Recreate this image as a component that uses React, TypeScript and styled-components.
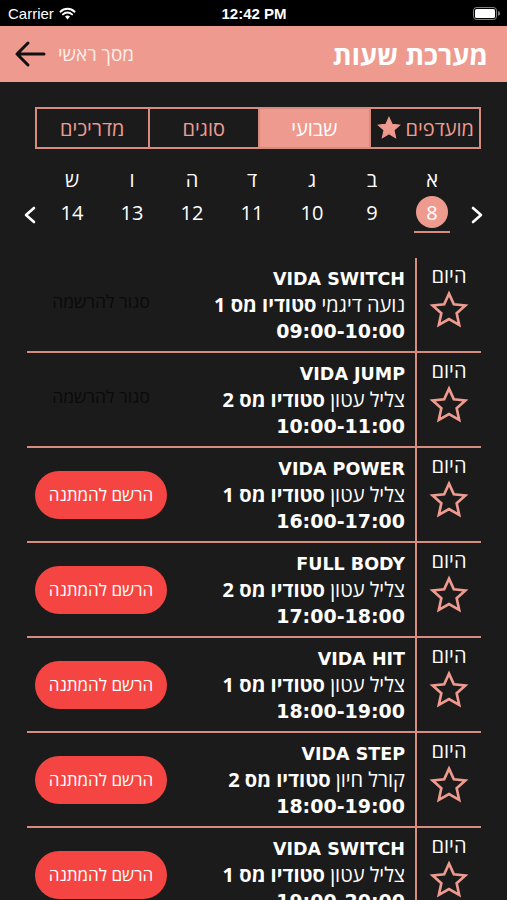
import React from 'react';
import styled, { createGlobalStyle } from 'styled-components';

const PINK = '#ee9a8f';
const LINE = '#d88b7f';
const BG = '#1b1b1b';
const RED = '#f54543';

const GlobalStyle = createGlobalStyle`
  html, body {
    margin: 0;
    padding: 0;
    background: ${BG};
  }
  body {
    font-family: 'Open Sans', 'DejaVu Sans', 'Liberation Sans', sans-serif;
    color: #fff;
  }
`;

const Screen = styled.div`
  width: 507px;
  height: 900px;
  overflow: hidden;
  background: ${BG};
`;

const StatusBar = styled.div`
  height: 26px;
  background: #000;
  display: grid;
  grid-template-columns: 1fr auto 1fr;
  align-items: center;
  padding: 0 7px 0 8px;
  font-size: 15px;
  color: #fff;
  font-family: 'Liberation Sans', 'DejaVu Sans', sans-serif;

  .left {
    display: flex;
    align-items: center;
    gap: 5px;
  }
  .time {
    font-weight: 700;
  }
  .right {
    display: flex;
    justify-content: flex-end;
  }
`;

const Header = styled.header`
  height: 56px;
  background: ${PINK};
  display: flex;
  direction: rtl;
  align-items: center;
  justify-content: space-between;
  padding: 0 19px 0 14px;

  h1 {
    margin: 0;
    font-size: 27px;
    font-weight: 700;
    color: #fff;
  }
`;

const BackLink = styled.div`
  display: flex;
  align-items: center;
  gap: 12px;
  font-size: 19px;
  color: #fdeeea;
`;

const Tabs = styled.nav`
  direction: rtl;
  display: grid;
  grid-template-columns: repeat(4, 1fr);
  margin: 25px 26px 0 35px;
  height: 42px;
  border: 2px solid ${LINE};
  box-sizing: border-box;
`;

const Tab = styled.div<{ $active?: boolean }>`
  display: flex;
  align-items: center;
  justify-content: center;
  gap: 4px;
  font-size: 20px;
  color: ${(p) => (p.$active ? '#fff' : '#ec9d91')};
  background: ${(p) => (p.$active ? PINK : 'transparent')};
  border-left: 2px solid ${LINE};
  &:last-child {
    border-left: none;
  }
`;

const Week = styled.div`
  direction: rtl;
  display: grid;
  grid-template-columns: 30px repeat(7, 60px) 24px;
  padding: 18px 15px 0 0;
  height: 65px;
  align-items: center;
`;

const Chevron = styled.div`
  display: flex;
  justify-content: center;
  align-items: center;
  padding-top: 30px;
`;

const Day = styled.div<{ $selected?: boolean }>`
  display: flex;
  flex-direction: column;
  align-items: center;
  color: #fff;

  .letter {
    font-size: 20px;
    line-height: 26px;
    height: 26px;
  }
  .num {
    margin-top: 3px;
    width: 32px;
    height: 32px;
    border-radius: 50%;
    display: flex;
    align-items: center;
    justify-content: center;
    font-size: 20px;
    background: ${(p) => (p.$selected ? PINK : 'transparent')};
  }
  .mark {
    margin-top: 3px;
    width: 36px;
    height: 2px;
    background: ${(p) => (p.$selected ? LINE : 'transparent')};
  }
`;

const List = styled.div`
  direction: rtl;
  margin: 26px 26px 0 27px;
`;

const Row = styled.div`
  display: grid;
  grid-template-columns: 66px 1fr auto;
  height: 95px;
  border-bottom: 2px solid ${LINE};
  box-sizing: border-box;
`;

const DayCol = styled.div`
  border-left: 2px solid ${LINE};
  display: flex;
  flex-direction: column;
  align-items: center;
  padding-top: 5px;
  gap: 2px;
  font-size: 20px;
  line-height: 25px;
`;

const Info = styled.div`
  padding: 8px 10px 0 0;
  text-align: right;
  color: #fff;
  line-height: 26px;

  .title {
    font-family: 'DejaVu Sans', sans-serif;
    font-size: 17.5px;
    font-weight: 700;
  }
  .who {
    font-size: 20px;
    b {
      font-weight: 700;
    }
  }
  .time {
    font-family: 'DejaVu Sans', sans-serif;
    font-size: 19px;
    font-weight: 700;
  }
`;

const Action = styled.div`
  width: 132px;
  margin-left: 8px;
  display: flex;
  align-items: center;
  justify-content: center;
`;

const Closed = styled.span`
  font-size: 17.5px;
  color: #0a0a0a;
  margin-bottom: 8px;
`;

const WaitButton = styled.button`
  width: 132px;
  height: 48px;
  border: none;
  border-radius: 24px;
  background: ${RED};
  color: #fff;
  font-family: inherit;
  font-size: 17px;
  direction: rtl;
  padding: 0;
`;

const StarIcon = ({ filled, size = 36 }: { filled?: boolean; size?: number }) => (
  <svg width={size} height={size} viewBox="0 0 24 24">
    <polygon
      points="12,2.2 14.9,8.6 21.8,9.3 16.6,14 18.1,20.9 12,17.4 5.9,20.9 7.4,14 2.2,9.3 9.1,8.6"
      fill={filled ? PINK : 'none'}
      stroke={PINK}
      strokeWidth={filled ? 1 : 1.6}
      strokeLinejoin="miter"
    />
  </svg>
);

const ChevronIcon = ({ dir }: { dir: 'left' | 'right' }) => (
  <svg width="14" height="20" viewBox="0 0 14 20">
    <polyline
      points={dir === 'right' ? '3,3 11,10 3,17' : '11,3 3,10 11,17'}
      fill="none"
      stroke="#fff"
      strokeWidth="2.6"
      strokeLinecap="round"
      strokeLinejoin="round"
    />
  </svg>
);

const days = [
  { l: 'א', n: 8 },
  { l: 'ב', n: 9 },
  { l: 'ג', n: 10 },
  { l: 'ד', n: 11 },
  { l: 'ה', n: 12 },
  { l: 'ו', n: 13 },
  { l: 'ש', n: 14 },
];

type Lesson = {
  title: string;
  coach: string;
  studio: string;
  time: string;
  open: boolean;
};

const lessons: Lesson[] = [
  { title: 'VIDA SWITCH', coach: 'נועה דיגמי', studio: 'סטודיו מס 1', time: '09:00-10:00', open: false },
  { title: 'VIDA JUMP', coach: 'צליל עטון', studio: 'סטודיו מס 2', time: '10:00-11:00', open: false },
  { title: 'VIDA POWER', coach: 'צליל עטון', studio: 'סטודיו מס 1', time: '16:00-17:00', open: true },
  { title: 'FULL BODY', coach: 'צליל עטון', studio: 'סטודיו מס 2', time: '17:00-18:00', open: true },
  { title: 'VIDA HIT', coach: 'צליל עטון', studio: 'סטודיו מס 1', time: '18:00-19:00', open: true },
  { title: 'VIDA STEP', coach: 'קורל חיון', studio: 'סטודיו מס 2', time: '18:00-19:00', open: true },
  { title: 'VIDA SWITCH', coach: 'צליל עטון', studio: 'סטודיו מס 1', time: '19:00-20:00', open: true },
];

export default function App() {
  return (
    <Screen>
      <GlobalStyle />
      <StatusBar>
        <div className="left">
          Carrier
          <svg width="17" height="13" viewBox="0 0 17 13">
            <path d="M8.5 12.5 L6 9.6 A3.6 3.6 0 0 1 11 9.6 Z" fill="#fff" />
            <path d="M3.9 7.4 A6.6 6.6 0 0 1 13.1 7.4" fill="none" stroke="#fff" strokeWidth="1.9" strokeLinecap="round" />
            <path d="M1.4 4.7 A10.2 10.2 0 0 1 15.6 4.7" fill="none" stroke="#fff" strokeWidth="1.9" strokeLinecap="round" />
          </svg>
        </div>
        <div className="time">12:42 PM</div>
        <div className="right">
          <svg width="27" height="13" viewBox="0 0 27 13">
            <rect x="0.5" y="0.5" width="23" height="12" rx="3" fill="none" stroke="#fff" strokeOpacity="0.5" />
            <rect x="2" y="2" width="20" height="9" rx="1.6" fill="#fff" />
            <path d="M25 4.3 A2.2 2.2 0 0 1 25 8.7 Z" fill="#fff" fillOpacity="0.5" />
          </svg>
        </div>
      </StatusBar>

      <Header>
        <h1>מערכת שעות</h1>
        <BackLink>
          מסך ראשי
          <svg width="32" height="28" viewBox="0 0 32 28">
            <path d="M30 14 H3 M14 3 L3 14 L14 25" fill="none" stroke="#111" strokeWidth="3" strokeLinecap="round" strokeLinejoin="round" />
          </svg>
        </BackLink>
      </Header>

      <Tabs>
        <Tab>
          מועדפים
          <StarIcon filled size={26} />
        </Tab>
        <Tab $active>שבועי</Tab>
        <Tab>סוגים</Tab>
        <Tab>מדריכים</Tab>
      </Tabs>

      <Week>
        <Chevron>
          <ChevronIcon dir="right" />
        </Chevron>
        {days.map((d, i) => (
          <Day key={d.l} $selected={i === 0}>
            <span className="letter">{d.l}</span>
            <span className="num">{d.n}</span>
            <span className="mark" />
          </Day>
        ))}
        <Chevron>
          <ChevronIcon dir="left" />
        </Chevron>
      </Week>

      <List>
        {lessons.map((l, i) => (
          <Row key={i}>
            <DayCol>
              <span>היום</span>
              <StarIcon size={40} />
            </DayCol>
            <Info>
              <div className="title">{l.title}</div>
              <div className="who">
                {l.coach} <b>{l.studio}</b>
              </div>
              <div className="time">{l.time}</div>
            </Info>
            <Action>
              {l.open ? <WaitButton>הרשם להמתנה</WaitButton> : <Closed>סגור להרשמה</Closed>}
            </Action>
          </Row>
        ))}
      </List>
    </Screen>
  );
}
